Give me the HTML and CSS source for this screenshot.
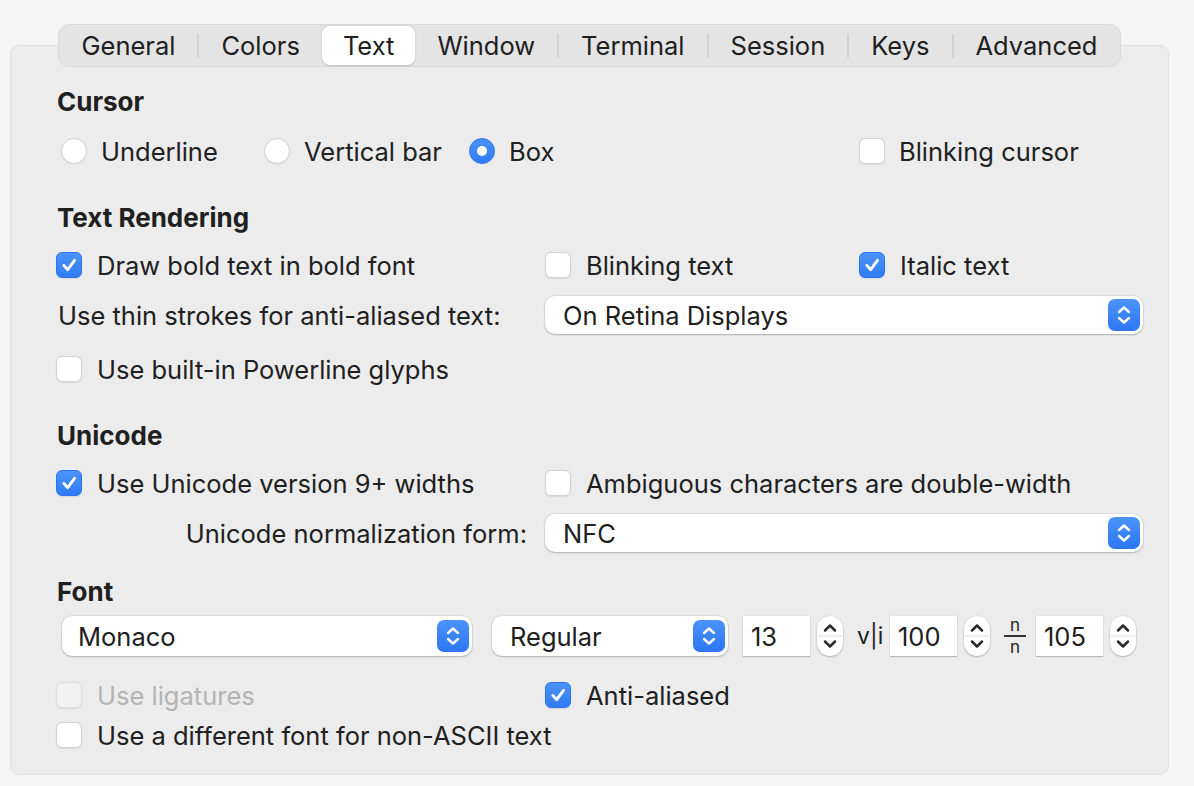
FILE: index.html
```html
<!DOCTYPE html>
<html lang="en">
<head>
<meta charset="utf-8">
<title>Text Preferences</title>
<link rel="stylesheet" href="styles.css">
</head>
<body>
<div class="window">
  <nav class="tabs">
    <span class="tab">General</span><span class="sep"></span>
    <span class="tab">Colors</span>
    <span class="tab active">Text</span>
    <span class="tab">Window</span><span class="sep"></span>
    <span class="tab">Terminal</span><span class="sep"></span>
    <span class="tab">Session</span><span class="sep"></span>
    <span class="tab">Keys</span><span class="sep"></span>
    <span class="tab">Advanced</span>
  </nav>

  <section class="panel">
    <div class="section">
      <div class="heading">Cursor</div>
      <div class="radio-row">
        <label class="opt radio-first"><span class="radio"></span>Underline</label>
        <label class="opt"><span class="radio"></span>Vertical bar</label>
        <label class="opt"><span class="radio on"></span>Box</label>
        <label class="opt"><span class="check"></span>Blinking cursor</label>
      </div>
    </div>

    <div class="section">
      <div class="heading">Text Rendering</div>
      <div class="row">
        <label class="opt"><span class="check on"><svg viewBox="0 0 26 26"><path d="M7.5 13.5 L11.5 18 L19 8" /></svg></span>Draw bold text in bold font</label>
        <label class="opt"><span class="check"></span>Blinking text</label>
        <label class="opt"><span class="check on"><svg viewBox="0 0 26 26"><path d="M7.5 13.5 L11.5 18 L19 8" /></svg></span>Italic text</label>
      </div>
      <div class="row">
        <span class="field-label">Use thin strokes for anti-aliased text:</span>
        <div class="popup wide"><span>On Retina Displays</span><span class="arrows"><svg viewBox="0 0 32 32"><path d="M11 13 L16 8.5 L21 13 M11 19 L16 23.5 L21 19" /></svg></span></div>
      </div>
      <div class="row row-loose">
        <label class="opt"><span class="check"></span>Use built-in Powerline glyphs</label>
      </div>
    </div>

    <div class="section">
      <div class="heading">Unicode</div>
      <div class="row">
        <label class="opt"><span class="check on"><svg viewBox="0 0 26 26"><path d="M7.5 13.5 L11.5 18 L19 8" /></svg></span>Use Unicode version 9+ widths</label>
        <label class="opt span2"><span class="check"></span>Ambiguous characters are double-width</label>
      </div>
      <div class="row">
        <span class="field-label right">Unicode normalization form:</span>
        <div class="popup wide"><span>NFC</span><span class="arrows"><svg viewBox="0 0 32 32"><path d="M11 13 L16 8.5 L21 13 M11 19 L16 23.5 L21 19" /></svg></span></div>
      </div>
    </div>

    <div class="section section-font">
      <div class="heading">Font</div>
      <div class="font-row">
        <div class="popup font-name"><span>Monaco</span><span class="arrows"><svg viewBox="0 0 32 32"><path d="M11 13 L16 8.5 L21 13 M11 19 L16 23.5 L21 19" /></svg></span></div>
        <div class="popup font-weight"><span>Regular</span><span class="arrows"><svg viewBox="0 0 32 32"><path d="M11 13 L16 8.5 L21 13 M11 19 L16 23.5 L21 19" /></svg></span></div>
        <span class="field size-field">13</span>
        <span class="stepper"><svg viewBox="0 0 26 40"><path class="div" d="M1 20 H25" /><path d="M8 14.5 L13 9.5 L18 14.5 M8 25.5 L13 30.5 L18 25.5" /></svg></span>
        <span class="glyph-vi">v|i</span>
        <span class="field">100</span>
        <span class="stepper"><svg viewBox="0 0 26 40"><path class="div" d="M1 20 H25" /><path d="M8 14.5 L13 9.5 L18 14.5 M8 25.5 L13 30.5 L18 25.5" /></svg></span>
        <span class="glyph-nn"><span>n</span><span class="bar"></span><span>n</span></span>
        <span class="field">105</span>
        <span class="stepper"><svg viewBox="0 0 26 40"><path class="div" d="M1 20 H25" /><path d="M8 14.5 L13 9.5 L18 14.5 M8 25.5 L13 30.5 L18 25.5" /></svg></span>
      </div>
      <div class="row row-after-font">
        <label class="opt disabled"><span class="check"></span>Use ligatures</label>
        <label class="opt"><span class="check on"><svg viewBox="0 0 26 26"><path d="M7.5 13.5 L11.5 18 L19 8" /></svg></span>Anti-aliased</label>
      </div>
      <div class="row row-tight">
        <label class="opt span3"><span class="check"></span>Use a different font for non-ASCII text</label>
      </div>
    </div>
  </section>
</div>
</body>
</html>
```

FILE: styles.css
```css
* { box-sizing: border-box; }

body {
  margin: 0;
  background: #f5f5f5;
  font-family: Inter, "Noto Sans", sans-serif;
  font-size: 25.5px;
  color: #202020;
}

.window {
  padding: 24px 25px 0 10px;
  display: flex;
  flex-direction: column;
}

/* ---------- tabs ---------- */
.tabs {
  position: relative;
  z-index: 1;
  align-self: center;
  display: flex;
  align-items: center;
  height: 43px;
  padding: 0 1px;
  border-radius: 11px;
  background: #e4e4e4;
  border: 1px solid #dadada;
}

.tab {
  height: 39px;
  display: flex;
  align-items: center;
  padding: 0 22px 1px;
  white-space: nowrap;
  border-radius: 8px;
}

.tab.active {
  background: #fff;
  padding: 0 21px 1px;
  box-shadow: 0 0.5px 2px rgba(0, 0, 0, 0.18);
}

.sep {
  width: 2px;
  height: 24px;
  background: #d2d2d2;
  flex: none;
}

/* ---------- panel ---------- */
.panel {
  margin-top: -22px;
  height: 730px;
  border: 1px solid #e0e0e0;
  border-radius: 9px;
  background: #ececec;
  padding: 40px 25px 20px 45px;
  display: flex;
  flex-direction: column;
}

.section {
  display: flex;
  flex-direction: column;
  gap: 10px;
}

.section + .section { margin-top: 31px; }
.section.section-font { margin-top: 23px; }

.heading {
  height: 30px;
  display: flex;
  align-items: center;
  font-weight: 700;
  font-size: 26px;
  padding-left: 1px;
  margin-bottom: 3px;
}

.section-font .heading { margin-bottom: 0; }

.radio-row {
  height: 40px;
  display: grid;
  grid-template-columns: 208px 205px 390px 1fr;
  align-items: center;
  margin-top: 2px;
}

.radio-row .opt { gap: 14px; }
.radio-first { padding-left: 5px; }

.row {
  height: 40px;
  display: grid;
  grid-template-columns: 489px 314px 1fr;
  align-items: center;
}

.row-loose { margin-top: 4px; }
.row-after-font { margin-top: 9px; }
.row-tight { margin-top: -10px; }

.span2 { grid-column: 2 / 4; }
.span3 { grid-column: 1 / 4; }

.opt {
  display: flex;
  align-items: center;
  gap: 15px;
  white-space: nowrap;
}

.opt.disabled { color: #b4b4b4; }

.field-label { padding-left: 2px; white-space: nowrap; }
.field-label.right { text-align: right; padding-right: 18px; }

/* ---------- controls ---------- */
.check {
  flex: none;
  width: 26px;
  height: 26px;
  border-radius: 6px;
  background: #fff;
  border: 1px solid #d2d2d2;
  box-shadow: 0 0.5px 1px rgba(0, 0, 0, 0.08);
  display: flex;
}

.disabled .check {
  background: #f1f1f1;
  border-color: #e0e0e0;
}

.check.on {
  background: linear-gradient(#4b93f9, #2f7bf5);
  border-color: #2d74ea;
}

.check svg, .arrows svg, .stepper svg {
  width: 100%;
  height: 100%;
  fill: none;
  stroke-linecap: round;
  stroke-linejoin: round;
}

.check svg path {
  stroke: #fff;
  stroke-width: 3.2;
}

.radio {
  flex: none;
  width: 26px;
  height: 26px;
  border-radius: 50%;
  background: #fff;
  border: 1px solid #d2d2d2;
  box-shadow: 0 0.5px 1px rgba(0, 0, 0, 0.08);
  display: flex;
  align-items: center;
  justify-content: center;
}

.radio.on {
  background: linear-gradient(#4b93f9, #2f7bf5);
  border-color: #2d74ea;
}

.radio.on::after {
  content: "";
  width: 10px;
  height: 10px;
  border-radius: 50%;
  background: #fff;
}

.popup {
  height: 38px;
  border-radius: 10px;
  background: #fff;
  box-shadow: 0 0 0 1px rgba(0, 0, 0, 0.05), 0 1px 2px rgba(0, 0, 0, 0.22);
  display: flex;
  align-items: center;
  justify-content: space-between;
  padding: 0 3px 0 18px;
  white-space: nowrap;
}

.popup.wide { grid-column: 2 / 4; }

.arrows {
  width: 32px;
  height: 32px;
  border-radius: 7px;
  background: linear-gradient(#4b93f9, #2c76f3);
  display: flex;
}

.arrows svg path {
  stroke: #fff;
  stroke-width: 2.4;
}

.font-row {
  height: 40px;
  display: flex;
  align-items: center;
}

.popup.font-name {
  width: 410px;
  height: 40px;
  margin-left: 6px;
  padding-left: 16px;
}

.popup.font-weight {
  width: 236px;
  height: 40px;
  margin-left: 20px;
}

.field {
  width: 67px;
  height: 40px;
  background: #fff;
  box-shadow: 0 0 0 0.5px rgba(0, 0, 0, 0.06), 0 1px 1px rgba(0, 0, 0, 0.2);
  display: flex;
  align-items: center;
  padding-left: 8px;
  margin-left: 9px;
}

.field.size-field { margin-left: 15px; }

.stepper {
  width: 26px;
  height: 40px;
  border-radius: 13px;
  background: #fff;
  box-shadow: 0 0 0 0.5px rgba(0, 0, 0, 0.08), 0 1px 2px rgba(0, 0, 0, 0.22);
  margin-left: 7px;
  display: flex;
}

.stepper svg path {
  stroke: #2a2a2a;
  stroke-width: 2.5;
}

.stepper svg path.div {
  stroke: #dcdcdc;
  stroke-width: 1;
}

.glyph-vi {
  margin-left: 14px;
  font-size: 23px;
  width: 24px;
}

.glyph-nn {
  margin-left: 14px;
  width: 22px;
  height: 40px;
  display: flex;
  flex-direction: column;
  align-items: center;
  justify-content: center;
  font-size: 17px;
  line-height: 20px;
}

.glyph-nn .bar {
  flex: none;
  width: 22px;
  height: 2px;
  background: #333;
}

.glyph-nn + .field { margin-left: 10px; }
```
